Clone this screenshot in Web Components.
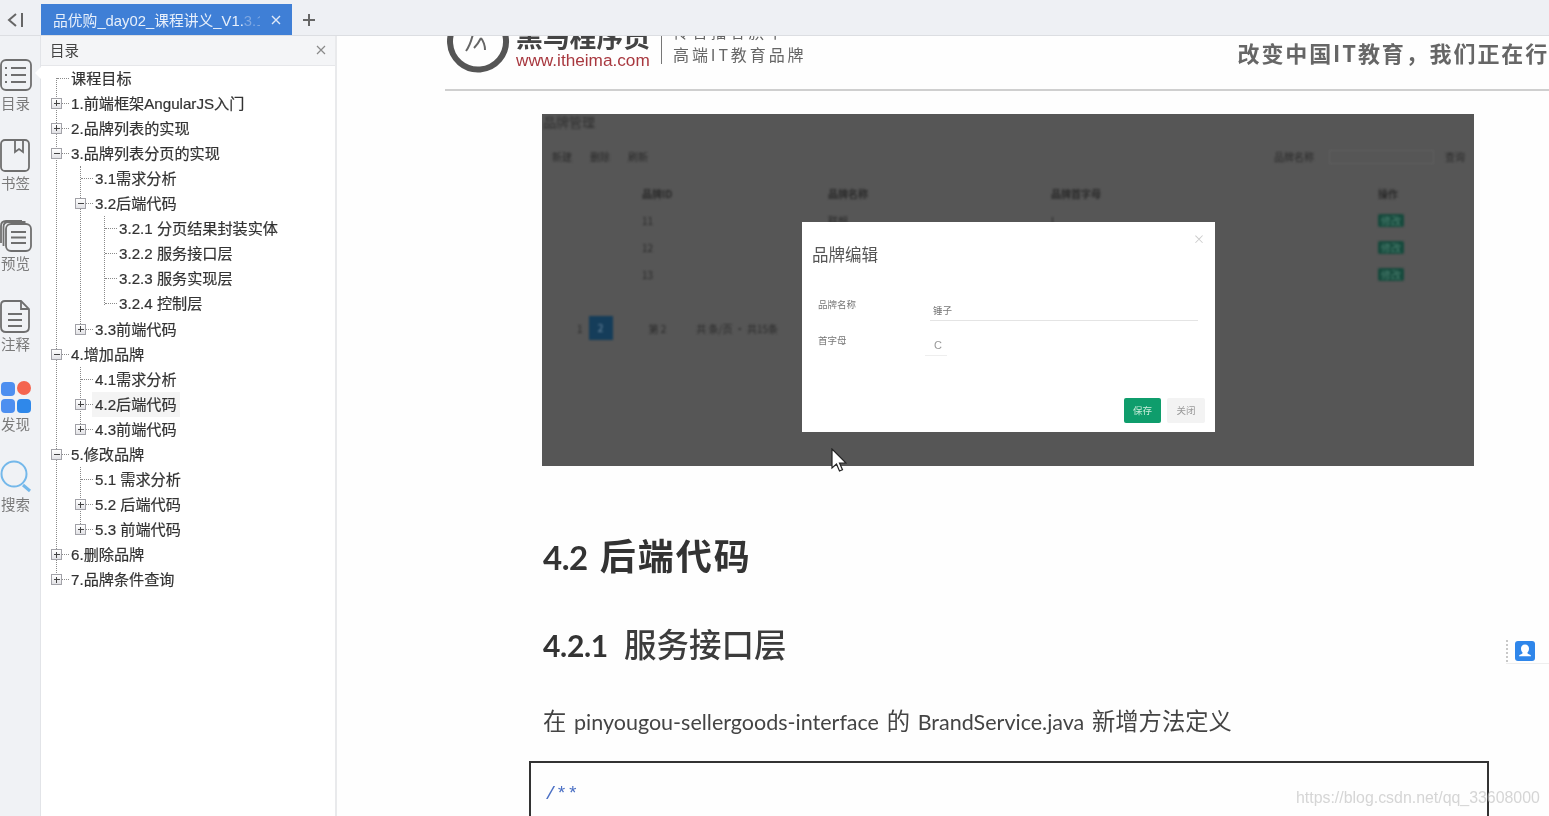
<!DOCTYPE html>
<html lang="zh">
<head>
<meta charset="utf-8">
<title>品优购_day02_课程讲义</title>
<style>
  html, body { margin: 0; height: 100%; overflow: hidden; background: #fff; }
</style>
</head>
<body>
<app-shell></app-shell>

<script>
const CJK = '"Noto Sans CJK SC", sans-serif';
const UI_FONT = '"Liberation Sans", "Noto Sans CJK SC", sans-serif';

class TabBar extends HTMLElement {
    constructor() {
        super();
        this.attachShadow({ mode: "open" });
    }

    connectedCallback() {
        this.shadowRoot.innerHTML = `
            <style>
                :host { display: flex; align-items: flex-end; height: 36px; background: #eef0f4; border-bottom: 1px solid #dcdee2; box-sizing: border-box; font-family: ${UI_FONT}; }
                .back { width: 41px; height: 31px; display: flex; align-items: center; justify-content: center; box-sizing: border-box; padding-right: 9px; }
                .tab { width: 251px; height: 31px; background: #3f7fd6; color: #e8f0fb; display: flex; align-items: center; padding-left: 12px; box-sizing: border-box; font-size: 14.8px; position: relative; white-space: nowrap; overflow: hidden; }
                .fade { color: #7fa8e2; }
                .close { position: absolute; right: 0; top: 0; bottom: 0; width: 32px; background: #3f7fd6; display: flex; align-items: center; justify-content: center; }
                .add { width: 34px; height: 31px; display: flex; align-items: center; justify-content: center; }
            </style>
            <div class="back">
                <svg width="18" height="16" viewBox="0 0 18 16" fill="none" stroke="#666" stroke-width="2"><path d="M9 2 2 8l7 6"/><path d="M15 1v14"/></svg>
            </div>
            <div class="tab">
                <span>品优购_day02_课程讲义_V1.<span class="fade">3.1</span></span>
                <span class="close">
                    <svg width="10" height="10" viewBox="0 0 10 10" stroke="#dfe9f8" stroke-width="1.4"><path d="M1 1l8 8M9 1 1 9"/></svg>
                </span>
            </div>
            <div class="add">
                <svg width="14" height="14" viewBox="0 0 14 14" stroke="#666" stroke-width="2"><path d="M7 1v12M1 7h12"/></svg>
            </div>
        `;
    }
}

const RAIL_ICONS = {
    list: `<rect x="1" y="1" width="30" height="30" rx="5"/><path d="M5 9h2M11 9h15M5 16h2M11 16h15M5 23h2M11 23h15"/>`,
    mark: `<rect x="1" y="1" width="28" height="31" rx="4"/><path d="M15 1v12l4-3 4 3V1"/>`,
    pages: `<rect x="6" y="5" width="25" height="27" rx="5"/><path d="M11 13h15M11 18.500h15M11 24h15M3.500 27V8q0-5 5-5h17M1 24V7q0-5 5-5h16"/>`,
    note: `<path d="M5 1h16l8 8v18q0 5-5 5H6q-5 0-5-5V5q0-4 4-4z"/><path d="M21 1v8h8M8 14h14M8 20h14M8 26h14"/>`,
    apps: `<rect x="1" y="2" width="14" height="14" rx="4" fill="#4d8ff0" stroke="none"/><circle cx="24" cy="8" r="7" fill="#f4654f" stroke="none"/><rect x="1" y="19" width="14" height="14" rx="4" fill="#4d8ff0" stroke="none"/><rect x="17" y="19" width="14" height="14" rx="4" fill="#2f88ea" stroke="none"/>`,
    search: `<circle cx="14" cy="14" r="12.500" stroke="#74b8ea" stroke-width="2"/><path d="M23 25l7 6" stroke="#74b8ea" stroke-width="3"/>`
};

class RailItem extends HTMLElement {
    constructor() {
        super();
        this.attachShadow({ mode: "open" });
    }

    connectedCallback() {
        const icon = RAIL_ICONS[this.getAttribute("icon")];
        this.shadowRoot.innerHTML = `
            <style>
                :host { display: flex; flex-direction: column; align-items: center; width: 31px; height: 80.2px; color: #7a7a7a; font: 14.5px ${CJK}; }
                svg { display: block; height: 33px; flex: none; }
                span { line-height: 20px; margin-top: 1px; white-space: nowrap; }
            </style>
            <svg width="32" height="33" viewBox="0 0 32 33" fill="none" stroke="#6f6f6f" stroke-width="1.800">${icon}</svg>
            <span><slot></slot></span>
        `;
    }
}

class SideRail extends HTMLElement {
    constructor() {
        super();
        this.attachShadow({ mode: "open" });
    }

    connectedCallback() {
        this.shadowRoot.innerHTML = `
            <style>
                :host { display: block; width: 41px; background: #f0f2f5; box-sizing: border-box; padding-top: 23px; position: relative; border-right: 1px solid #e2e4e8; }
                .notch { position: absolute; right: -1px; top: 31px; width: 0; height: 0; border: 6px solid transparent; border-right-color: #fff; border-left: 0; }
            </style>
            <div class="notch"></div>
            <rail-item icon="list">目录</rail-item>
            <rail-item icon="mark">书签</rail-item>
            <rail-item icon="pages">预览</rail-item>
            <rail-item icon="note">注释</rail-item>
            <rail-item icon="apps">发现</rail-item>
            <rail-item icon="search">搜索</rail-item>
        `;
    }
}

const TOC = [
    { t: "课程目标" },
    { t: "1.前端框架AngularJS入门", closed: true },
    { t: "2.品牌列表的实现", closed: true },
    { t: "3.品牌列表分页的实现", kids: [
        { t: "3.1需求分析" },
        { t: "3.2后端代码", kids: [
            { t: "3.2.1 分页结果封装实体" },
            { t: "3.2.2 服务接口层" },
            { t: "3.2.3 服务实现层" },
            { t: "3.2.4 控制层" }
        ] },
        { t: "3.3前端代码", closed: true }
    ] },
    { t: "4.增加品牌", kids: [
        { t: "4.1需求分析" },
        { t: "4.2后端代码", closed: true, on: true },
        { t: "4.3前端代码", closed: true }
    ] },
    { t: "5.修改品牌", kids: [
        { t: "5.1 需求分析" },
        { t: "5.2 后端代码", closed: true },
        { t: "5.3 前端代码", closed: true }
    ] },
    { t: "6.删除品牌", closed: true },
    { t: "7.品牌条件查询", closed: true }
];

class TocTree extends HTMLElement {
    constructor() {
        super();
        this.attachShadow({ mode: "open" });
    }

    renderNodes(nodes) {
        return `<ul>${nodes.map((n) => {
            let box = "";
            if (n.kids || n.closed) {
                box = `<i class="box ${n.kids ? "minus" : "plus"}"></i>`;
            }
            const kids = n.kids ? this.renderNodes(n.kids) : "";
            return `<li><div class="row">${box}<span class="${n.on ? "on" : ""}">${n.t}</span></div>${kids}</li>`;
        }).join("")}</ul>`;
    }

    connectedCallback() {
        this.shadowRoot.innerHTML = `
            <style>
                :host { display: block; margin-top: -.4px; padding: 0 0 0 15px; font: 15.150px ${UI_FONT}; color: #333; -webkit-text-stroke: .2px #333; }
                ul { list-style: none; margin: 0 0 0 24px; padding: 0; position: relative; }
                :host > ul { margin-left: 0; }
                ul::before { content: ""; position: absolute; left: 0; top: 0; bottom: 12px; border-left: 1px dotted #8a8a8a; }
                :host > ul::before { top: 12px; }
                .row { height: 25.1px; line-height: 25.1px; padding-left: 15px; position: relative; white-space: nowrap; }
                .row::before { content: ""; position: absolute; left: 1px; width: 12px; top: 12px; border-top: 1px dotted #8a8a8a; }
                .row span { display: inline-block; }
                .row span.on { background: #f4f4f4; margin-left: -3px; padding: 0 3px; }
                .box { position: absolute; left: -5px; top: 7px; width: 9px; height: 9px; border: 1px solid #a2a2a8; background: linear-gradient(#fff, #e2e2e6); z-index: 1; }
                .box::before { content: ""; position: absolute; left: 1.500px; right: 1.500px; top: 4px; height: 1px; background: #444; }
                .box.plus::after { content: ""; position: absolute; top: 1.500px; bottom: 1.500px; left: 4px; width: 1px; background: #444; }
            </style>
            ${this.renderNodes(TOC)}
        `;
    }
}

class TocPanel extends HTMLElement {
    constructor() {
        super();
        this.attachShadow({ mode: "open" });
    }

    connectedCallback() {
        this.shadowRoot.innerHTML = `
            <style>
                :host { display: flex; flex-direction: column; width: 294px; background: #fff; border-right: 2px solid #e9eaec; box-sizing: content-box; }
                header { box-sizing: content-box; height: 27px; padding: 0 9px 2px 9px; display: flex; align-items: center; justify-content: space-between; background: #f4f5f7; border-bottom: 1px solid #e6e7ea; color: #444; font: 14.5px ${CJK}; }
            </style>
            <header>
                <span>目录</span>
                <svg width="10" height="10" viewBox="0 0 10 10" stroke="#8a8a8a" stroke-width="1.200"><path d="M1 1l8 8M9 1 1 9"/></svg>
            </header>
            <toc-tree></toc-tree>
        `;
    }
}

class BrandModal extends HTMLElement {
    constructor() {
        super();
        this.attachShadow({ mode: "open" });
    }

    connectedCallback() {
        this.shadowRoot.innerHTML = `
            <style>
                :host { position: absolute; left: 260px; top: 108px; width: 413px; height: 210px; background: #fff; box-sizing: border-box; padding: 23px 10px 0; display: flex; flex-direction: column; font: 9.500px ${CJK}; color: #888; }
                .x { position: absolute; right: 10px; top: 11px; font-size: 12px; color: #ccc; line-height: 12px; }
                h2 { margin: 0; font-size: 16.500px; line-height: 18px; font-weight: 400; color: #555; }
                .form { display: grid; grid-template-columns: 112px 1fr; margin: 34px 7px 0 6px; }
                .lbl { line-height: 14px; color: #777; }
                .one { box-sizing: border-box; border-bottom: 1px solid #e4e4e4; height: 24px; padding: 6px 0 0 3px; line-height: 14px; color: #777; margin-bottom: 12px; }
                .two { box-sizing: border-box; width: 22px; border-bottom: 1px solid #eee; height: 18px; padding: 0 0 0 9px; margin: 5px 0 0 -5px; font: 11px/14px "Liberation Sans", sans-serif; color: #999; }
                .acts { display: flex; justify-content: flex-end; gap: 6px; position: absolute; right: 10px; bottom: 9px; }
                .acts span { width: 38px; height: 25px; line-height: 25px; text-align: center; border-radius: 2px; background: #f3f3f3; color: #999; font-size: 9.500px; }
                .acts .save { width: 37px; background: #0f9d6c; color: #c8ecd9; }
            </style>
            <span class="x">×</span>
            <h2>品牌编辑</h2>
            <div class="form">
                <div class="lbl">品牌名称</div>
                <div class="one">锤子</div>
                <div class="lbl">首字母</div>
                <div class="two">C</div>
            </div>
            <div class="acts"><span class="save">保存</span><span>关闭</span></div>
        `;
    }
}

class BrandShot extends HTMLElement {
    constructor() {
        super();
        this.attachShadow({ mode: "open" });
    }

    connectedCallback() {
        const rows = ["11", "12", "13"].map((id, i) => `
            <div class="row">
                <span></span><span>${id}</span>
                <span>${i === 0 ? "联想" : ""}</span><span>${i === 0 ? "L" : ""}</span>
                <span><b>修改</b></span>
            </div>`).join("");
        this.shadowRoot.innerHTML = `
            <style>
                :host { display: block; position: relative; width: 932px; height: 352px; background: #565656; overflow: hidden; margin-left: 205px; }
                .page { filter: blur(.8px); font: 10px ${CJK}; color: #2a2a2a; }
                .title { height: 16px; line-height: 16px; font-size: 13px; color: #303030; padding-left: 1px; }
                .tools { display: flex; justify-content: space-between; height: 14px; line-height: 14px; margin-top: 20px; padding: 0 9px 0 10px; }
                .tools div { display: flex; align-items: center; }
                .tools .left { gap: 18px; }
                .search { width: 105px; height: 14px; border: 1px solid #606060; box-sizing: border-box; margin: 0 11px 0 15px; }
                .row { display: grid; grid-template-columns: 100px 186px 223px 327px 60px; height: 27px; line-height: 27px; }
                .head { margin-top: 16px; font-weight: 700; }
                .row b { display: block; width: 26px; height: 13px; margin-top: 7px; line-height: 13px; text-align: center; background: #174a3d; color: #4a7f6f; font-weight: 400; border-radius: 2px; }
                .pager { display: flex; align-items: center; height: 26px; margin-top: 27px; padding-left: 35px; }
                .pager .cur { width: 24px; height: 24px; line-height: 24px; text-align: center; background: #153d5a; color: #6f8aa0; margin: 0 36px 0 6px; }
                .pager .txt { margin-left: 30px; }
            </style>
            <div class="page">
                <div class="title">品牌管理</div>
                <div class="tools">
                    <div class="left"><span>新建</span><span>删除</span><span>刷新</span></div>
                    <div><span>品牌名称</span><span class="search"></span><span>查询</span></div>
                </div>
                <div class="row head"><span></span><span>品牌ID</span><span>品牌名称</span><span>品牌首字母</span><span>操作</span></div>
                ${rows}
                <div class="pager"><span>1</span><span class="cur">2</span><span>第 2</span><span class="txt">共 条/页 · 共15条</span></div>
            </div>
            <brand-modal></brand-modal>
        `;
    }
}

class DocHead extends HTMLElement {
    constructor() {
        super();
        this.attachShadow({ mode: "open" });
    }

    connectedCallback() {
        this.shadowRoot.innerHTML = `
            <style>
                :host { display: flex; align-items: flex-start; height: 73px; margin-left: 108px; border-bottom: 2px solid #cfcfcf; color: #555; white-space: nowrap; overflow: hidden; }
                svg { flex: none; margin: -5px 6px 0 1px; }
                .brand { width: 134px; }
                .cn { font: 700 26.800px/28px ${CJK}; height: 28px; margin-top: 6px; color: #444; }
                .url { font: 17.200px/18px "Liberation Sans", sans-serif; color: #a8383f; margin-top: 1px; }
                .sep { width: 1px; height: 48px; background: #777; margin: 0 12px 0 11px; flex: none; }
                .tag { font: 16px/20px ${CJK}; letter-spacing: 2.900px; color: #666; margin-left: -1px; }
                .tag div:first-child { margin-top: 5px; margin-bottom: 3px; }
                .slogan { margin-left: auto; font: 700 22px/30px ${CJK}; color: #666; margin-top: 21px; margin-right: -24px; letter-spacing: 1.900px; }
            </style>
            <svg width="64" height="64" viewBox="0 0 64 64" fill="none">
                <path d="M50 9A28 28 0 1 1 11 12" stroke="#555" stroke-width="6"/>
                <path d="M20 40c3-4 5-9 7-17M35 27c-2 4-5 8-7 10M35 27c3 4 4 8 4 12M42 17c0-4 1-7 2-10" stroke="#666" stroke-width="2"/>
            </svg>
            <div class="brand">
                <div class="cn">黑马程序员</div>
                <div class="url">www.itheima.com</div>
            </div>
            <div class="sep"></div>
            <div class="tag"><div>传智播客旗下</div><div>高端IT教育品牌</div></div>
            <div class="slogan">改变中国IT教育，我们正在行动</div>
        `;
    }
}

class DocView extends HTMLElement {
    constructor() {
        super();
        this.attachShadow({ mode: "open" });
    }

    connectedCallback() {
        this.shadowRoot.innerHTML = `
            <style>
                :host { display: block; flex: 1; min-width: 0; background: #fefefe; overflow: hidden; position: relative; }
                .page { margin-top: -20px; }
                brand-shot { margin-top: 23px; }
                .body { margin-left: 206px; color: #333; }
                h1, h2, p { margin: 0; white-space: nowrap; }
                h1 { font: 700 36px/44px ${CJK}; margin-top: 66px; letter-spacing: 2px; color: #333; }
                h1 .num { font: 700 33px/44px Lato, sans-serif; letter-spacing: -.5px; margin-right: 12px; }
                h2 { font: 500 32.500px/44px ${CJK}; margin-top: 42px; color: #3c3c3c; }
                h2 .num { font: 700 30px/44px Lato, sans-serif; color: #333; margin-right: 16px; letter-spacing: -.3px; }
                p { font: 21.500px/34px Lato, sans-serif; word-spacing: 2.200px; margin-top: 36px; color: #444; }
                p span { font: 23.300px/34px ${CJK}; }
                .code { margin: 22px 0 0 192px; width: 960px; height: 120px; border: 2px solid #333; box-sizing: border-box; padding: 20px 14px; font: 18.500px/24px "Liberation Mono", monospace; color: #4a6fc4; }
                .pin { position: absolute; left: 1169px; top: 603px; width: 44px; height: 24px; display: flex; align-items: center; gap: 7px; border-bottom: 1px solid #eee; }
                .pin i { width: 0; height: 22px; border-left: 2px dotted #c8c8c8; }
                .pin svg { flex: none; }
            </style>
            <div class="page">
                <doc-head></doc-head>
                <brand-shot></brand-shot>
                <div class="body">
                    <h1><span class="num">4.2</span>后端代码</h1>
                    <h2><span class="num">4.2.1</span>服务接口层</h2>
                    <p><span>在</span> pinyougou-sellergoods-interface <span>的</span> BrandService.java <span>新增方法定义</span></p>
                </div>
                <div class="code">/**</div>
            </div>
            <div class="pin">
                <i></i>
                <svg width="20" height="20" viewBox="0 0 20 20"><rect width="20" height="20" rx="3" fill="#2f86ea"/><path d="M10 3.500c2.600 0 4 1.800 4 4 0 2-.8 3.500-1.700 4.300 0 .8.900 1.400 2.700 2 .6.200 1 .8 1 1.400H4c0-.6.400-1.200 1-1.400 1.800-.6 2.700-1.200 2.700-2C6.800 11 6 9.500 6 7.500c0-2.200 1.400-4 4-4z" fill="#fff"/></svg>
            </div>
        `;
    }
}

class AppShell extends HTMLElement {
    constructor() {
        super();
        this.attachShadow({ mode: "open" });
    }

    connectedCallback() {
        this.shadowRoot.innerHTML = `
            <style>
                :host { display: flex; flex-direction: column; height: 100vh; position: relative; overflow: hidden; filter: blur(.45px); }
                .main { flex: 1; display: flex; min-height: 0; }
                .mark { position: absolute; left: 1296px; top: 788px; font: 15.900px/20px "Liberation Sans", sans-serif; color: rgba(190, 190, 190, .65); white-space: nowrap; }
                .cursor { position: absolute; left: 831px; top: 448px; }
            </style>
            <tab-bar></tab-bar>
            <div class="main">
                <side-rail></side-rail>
                <toc-panel></toc-panel>
                <doc-view></doc-view>
            </div>
            <div class="mark">https://blog.csdn.net/qq_33608000</div>
            <svg class="cursor" width="16" height="24" viewBox="0 0 16 24"><path d="M1 1v19l4.500-4 3 7 3-1.300-3-6.700H15z" fill="#fff" stroke="#222" stroke-width="1.200"/></svg>
        `;
    }
}

customElements.define("tab-bar", TabBar);
customElements.define("rail-item", RailItem);
customElements.define("side-rail", SideRail);
customElements.define("toc-tree", TocTree);
customElements.define("toc-panel", TocPanel);
customElements.define("brand-modal", BrandModal);
customElements.define("brand-shot", BrandShot);
customElements.define("doc-head", DocHead);
customElements.define("doc-view", DocView);
customElements.define("app-shell", AppShell);
</script>
</body>
</html>
